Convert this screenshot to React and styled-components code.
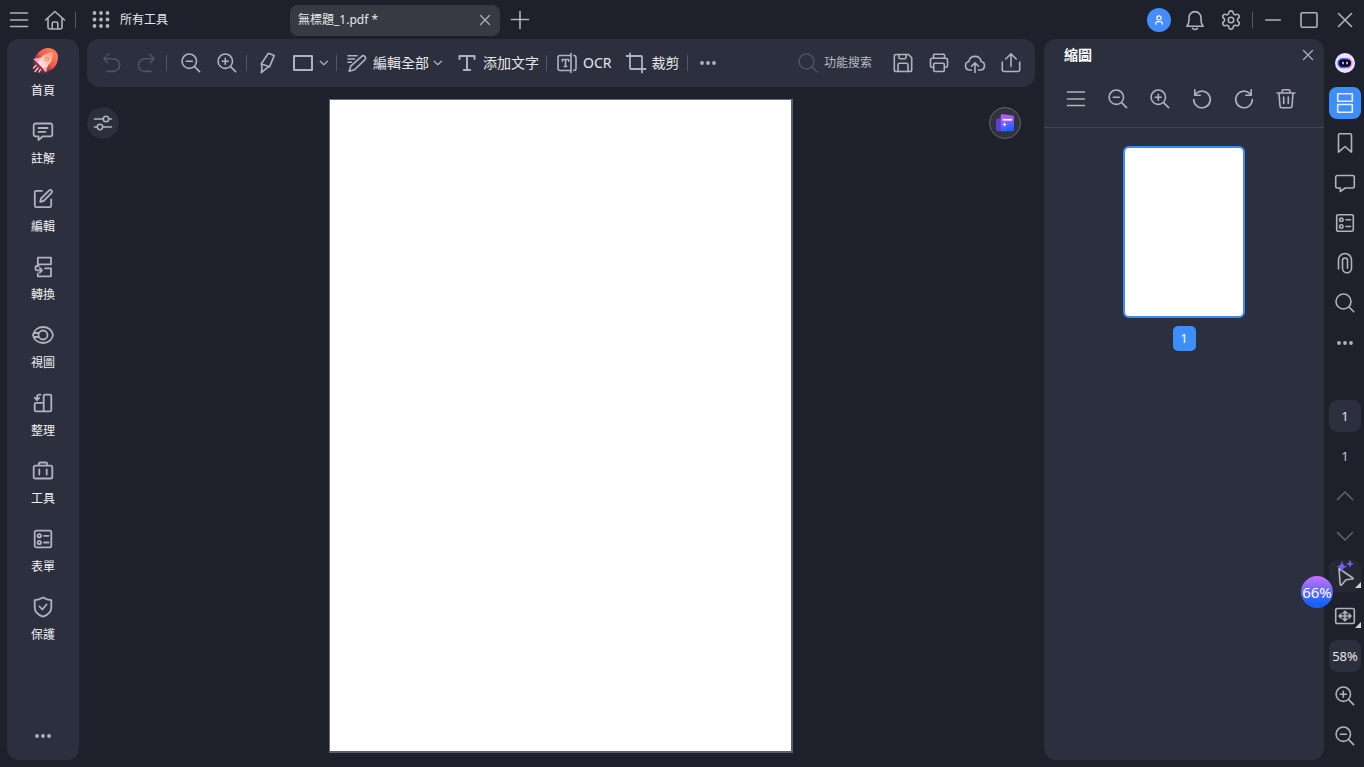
import React, { useState } from 'react';
import styled, { createGlobalStyle } from 'styled-components'
import { Settings } from 'lucide-react'

const GlobalStyle = createGlobalStyle`
    * {
        box-sizing: border-box;
    }

    body {
        margin: 0;
        background: #1e202b;
        color: #e6e7eb;
        font-family: "Noto Sans", "Noto Sans CJK TC", sans-serif;
        font-size: 12px;
        line-height: 16px;
    }

    button, input {
        font: inherit;
        color: inherit;
        background: none;
        border: 0;
        margin: 0;
        padding: 0;
        outline: none;
    }

    button {
        cursor: pointer;
    }
`

const Window = styled.div`
    display: flex;
    flex-direction: column;
    min-height: 100vh;
`

const TitleBar = styled.header`
    display: flex;
    align-items: center;
    height: 39px;
    padding: 1px 7px 0;
`

const TitleStart = styled.div`
    display: flex;
    align-items: center;
    flex: 0 0 283px;
`

const TitleEnd = styled.div`
    display: flex;
    align-items: center;
    gap: 12px;
    margin-left: auto;
`

const Cluster = styled.div`
    display: flex;
    align-items: center;
    gap: ${props => props.$gap ?? 12}px;
`

const Divider = styled.span`
    width: 1px;
    height: 16px;
    margin: 0 ${props => props.$after ?? 8}px 0 ${props => props.$before ?? 7}px;
    background: #555863;
`

const Svg = styled.svg`
    display: block;
    flex: none;
    width: 24px;
    height: 24px;
    overflow: visible;
    fill: none;
    stroke: currentColor;
    stroke-width: ${props => props.$weight || 1.6};
    stroke-linecap: round;
    stroke-linejoin: round;
`

const IconButton = styled.button`
    display: flex;
    align-items: center;
    justify-content: center;
    width: 24px;
    height: 24px;
    color: ${props => props.$dim ? '#4f525f' : '#b0b3be'};
`

const TextButton = styled.button`
    display: flex;
    align-items: center;
    gap: ${props => props.$gap ?? 4}px;
    font-size: ${props => props.$small ? 12 : 14}px;
    line-height: 24px;
    white-space: nowrap;
    color: #e6e7eb;

    svg {
        color: #b0b3be;
    }
`

const Avatar = styled.button`
    display: flex;
    align-items: center;
    justify-content: center;
    width: 24px;
    height: 24px;
    border-radius: 50%;
    background: #458cff;
    color: white;
`

const Tab = styled.div`
    display: flex;
    align-items: center;
    justify-content: space-between;
    width: 210px;
    height: 31px;
    margin-right: 8px;
    padding: 0 3px 0 8px;
    border-radius: 8px;
    background: #383a43;
`

const Body = styled.div`
    display: flex;
    flex: 1;
    padding: 0 3px 7px 7px;
`

const SideNav = styled.nav`
    display: flex;
    flex-direction: column;
    align-items: center;
    gap: 20px;
    flex: 0 0 72px;
    margin-right: 8px;
    padding: 12px 0;
    border-radius: 12px;
    background: #2c2f3d;

    > :last-child {
        margin-top: auto;
    }
`

const NavItem = styled.button`
    display: flex;
    flex-direction: column;
    align-items: center;
    gap: 8px;
    width: 56px;
    line-height: 16px;
    color: #f1f1f4;

    svg {
        color: #b0b3be;
    }
`

const Center = styled.main`
    display: flex;
    flex-direction: column;
    flex: 1;
    min-width: 0;
`

const Toolbar = styled.div`
    display: flex;
    align-items: center;
    height: 48px;
    padding: 0 12px;
    border-radius: 12px;
    background: #2c2f3d;
`

const Search = styled.label`
    display: flex;
    align-items: center;
    gap: 4px;
    margin-left: auto;
    color: #4f525f;

    input {
        width: 55px;
        margin-right: 12px;
        color: #c4c6cd;
    }

    input::placeholder {
        color: #b9bbc3;
        opacity: 1;
    }
`

const Canvas = styled.section`
    display: grid;
    grid-template-columns: 1fr auto 1fr;
    align-items: start;
    flex: 1;
`

const Sheet = styled.div`
    width: 464px;
    aspect-ratio: 464 / 654;
    margin: 12px 0 7px;
    border: 1px solid #6a6c80;
    border-right: 2px solid #5a5c74;
    border-bottom: 2px solid #5a5c74;
    background: white;
`

const RoundButton = styled.button`
    display: flex;
    align-items: center;
    justify-content: center;
    width: 32px;
    height: 32px;
    margin: 20px 14px 0 0;
    justify-self: ${props => props.$end ? 'end' : 'start'};
    border-radius: 50%;
    border: 1px solid ${props => props.$end ? '#62646d' : '#2c2f3d'};
    background: ${props => props.$end ? '#30323c' : '#2c2f3d'};
    color: #b0b3be;
`

const Panel = styled.aside`
    flex: 0 0 280px;
    margin: 0 5px 0 9px;
    border-radius: 12px;
    background: #2c2f3d;
`

const PanelHeader = styled.div`
    display: flex;
    align-items: center;
    justify-content: space-between;
    height: 32px;
    padding: 0 4px 0 20px;
`

const PanelTitle = styled.h2`
    margin: 0;
    font-size: 14px;
    font-weight: 700;
    line-height: 24px;
    color: white;
`

const PanelTools = styled.div`
    display: flex;
    align-items: center;
    gap: 18px;
    height: 57px;
    padding: 0 20px;
    border-bottom: 1px solid #404351;
`

const Thumbnail = styled.button`
    display: flex;
    flex-direction: column;
    align-items: center;
    gap: 8px;
    margin: 18px auto 0;
`

const ThumbSheet = styled.span`
    width: 122px;
    height: 172px;
    border: 2px solid #398cf5;
    border-radius: 6px;
    background: white;
`

const PageBadge = styled.span`
    width: 23px;
    border-radius: 5px;
    background: #3c8ffa;
    color: white;
    font-size: 13px;
    line-height: 25px;
`

const Rail = styled.aside`
    display: flex;
    flex-direction: column;
    justify-content: space-between;
    flex: 0 0 32px;
    padding: 8px 0;
`

const RailGroup = styled.div`
    display: flex;
    flex-direction: column;
    gap: 8px;
`

const RailButton = styled.button`
    position: relative;
    display: flex;
    align-items: center;
    justify-content: center;
    width: 32px;
    height: 32px;
    border-radius: 8px;
    font-size: 13px;
    background: ${props => props.$active ? '#3c8ffa' : props.$filled ? '#2c2f3d' : props.$hover ? '#272932' : 'none'};
    color: ${props => props.$active ? '#e3edff' : props.$dim ? '#60636e' : props.$filled ? '#e6e7eb' : '#b0b3be'};
`

const PageField = styled.input`
    width: 32px;
    height: 32px;
    border-radius: 8px;
    background: #2c2f3d;
    font-size: 13px;
    text-align: center;
`

const PageTotal = styled.span`
    width: 32px;
    font-size: 13px;
    line-height: 32px;
    text-align: center;
    color: #c4c6cd;
`

const Corner = styled.span`
    position: absolute;
    right: 0;
    bottom: 4px;
    border-left: 6px solid transparent;
    border-bottom: 6px solid #d0d2d9;
`

const ToolSlot = styled.div`
    position: relative;
`

const Progress = styled.div`
    position: absolute;
    top: 16px;
    left: -28px;
    display: flex;
    align-items: center;
    justify-content: center;
    width: 32px;
    height: 32px;
    border-radius: 50%;
    background: linear-gradient(#c772fb, #1763ff 85%);
    color: white;
    font-size: 15px;
`

const LENS = 'M17.5 10.2a7.2 7.2 0 1 1-14.4 0 7.2 7.2 0 0 1 14.4 0zM15.6 15.6l5 5'

const PATHS = {
    menu: 'M3.5 5h17M3.5 12h17M3.5 18.5h17',
    home: 'M2.5 12 12 3.5l9.5 8.5M5 10.2V19a2 2 0 0 0 2 2h10a2 2 0 0 0 2-2v-8.8M9.2 21v-5.5a1.5 1.5 0 0 1 1.5-1.5h2.6a1.5 1.5 0 0 1 1.5 1.5V21',
    plus: 'M12 3.5v17M3.5 11.500h17',
    bell: 'M3.8 18.2c1.6-1.8 2.2-3.6 2.2-6V9.600a6 6 0 0 1 12 0v2.600c0 2.400.6 4.200 2.200 6zM9.500 20.300a3.200 3.200 0 0 0 5 0',
    minimize: 'M4.700 12h14.600',
    maximize: 'M5.500 4.700h13a1.500 1.500 0 0 1 1.500 1.500v11.600a1.500 1.500 0 0 1-1.500 1.500h-13a1.500 1.500 0 0 1-1.500-1.500V6.200a1.500 1.500 0 0 1 1.500-1.500z',
    close: 'm5.500 5.500 13 13M18.500 5.500l-13 13',
    closeSmall: 'm7.500 7.500 9 9M16.500 7.500l-9 9',
    user: 'M12 7.800a2.100 2.100 0 1 1 0 4.200 2.100 2.100 0 0 1 0-4.200zM8.700 16.200v-.5c0-1.200.9-2 2-2h2.600c1.100 0 2 .8 2 2v.5',
    undo: 'M9.600 3 4.800 7.800l3.800 3.900M5 7.800h9.400a6.300 6.300 0 0 1 0 12.600H8',
    redo: 'm14.400 3 4.800 4.800-3.800 3.900M19 7.800H9.600a6.300 6.300 0 0 0 0 12.600H16',
    zoomOut: LENS + 'M7.300 10.200h6',
    zoomIn: LENS + 'M7.300 10.200h6M10.300 7.200v6',
    search: 'M18 10.500a7.500 7.500 0 1 1-15 0 7.500 7.500 0 0 1 15 0zM16 16l4.800 4.800',
    highlighter: 'm13.400 2.300 5.900 2.100-4.600 11-3 1.700-5.400 4.600.7-4.500-.7-4.500zM6.400 12.900l8.300 2.900',
    rect: 'M3 5h18v14H3z',
    editAll: 'M16.500 5.600a2.300 2.300 0 0 1 3.500 3L9.500 18.800l-5.300 1.500 1.500-5.100zM3 4.800h9M3 8h6.500M3 11.200h3.500',
    text: 'M4.500 8V5h15v3M12 5v14M8.800 19h6.400',
    ocr: 'M16 4.500H5a2 2 0 0 0-2 2v11a2 2 0 0 0 2 2h11M18.800 4.500a2.200 2.200 0 0 1 2.200 2.200v10.600a2.200 2.200 0 0 1-2.200 2.200M16 2.500v19M7.300 10.200V8.500h6.400v1.700M10.500 8.500v7M9.300 15.500h2.400',
    crop: 'M6 2.500V17a1 1 0 0 0 1 1h14.500M2.500 5H17a1 1 0 0 1 1 1v15.500',
    save: 'M4.700 3.500h12.800l3.200 3.200v12a1.800 1.800 0 0 1-1.800 1.800H5.100a1.800 1.800 0 0 1-1.800-1.800V4.900a1.400 1.400 0 0 1 1.400-1.400zM8 3.800v2.700a1.300 1.300 0 0 0 1.300 1.300h4.400A1.300 1.300 0 0 0 15 6.500V3.800M7 20.300v-6.500a1.500 1.500 0 0 1 1.500-1.500h7a1.500 1.500 0 0 1 1.500 1.500v6.500',
    print: 'M6.500 7V4a.7.7 0 0 1 .7-.7h9.600a.7.7 0 0 1 .7.700v3M6.500 16.300H5a1.500 1.500 0 0 1-1.500-1.500V9A1.800 1.800 0 0 1 5.300 7.200h13.400A1.800 1.800 0 0 1 20.500 9v5.800a1.500 1.500 0 0 1-1.500 1.500h-1.500M8 12.300h8a1.300 1.300 0 0 1 1.300 1.300v5.600a1.300 1.300 0 0 1-1.300 1.300H8a1.300 1.300 0 0 1-1.300-1.300v-5.600A1.300 1.300 0 0 1 8 12.300z',
    cloud: 'M8.500 19H6.700a4.300 4.300 0 0 1-.8-8.500 6.200 6.200 0 0 1 12.200 0 4.300 4.300 0 0 1-.8 8.500h-1.800M12 21.500V12.300M8.500 15.300l3.500-3.500 3.500 3.500',
    share: 'M3.300 11v7.500a2 2 0 0 0 2 2h13.400a2 2 0 0 0 2-2V11M12 15.500V3M6.800 8 12 2.800 17.200 8',
    note: 'M4.500 4.500h15a1.800 1.800 0 0 1 1.800 1.800v9.200a1.800 1.800 0 0 1-1.800 1.800h-7.700L7.500 21v-3.700h-3a1.800 1.800 0 0 1-1.800-1.800V6.300a1.800 1.800 0 0 1 1.800-1.800zM7.500 9h9M7.500 12.800h7',
    edit: 'M11 3.800H5.300a1.500 1.500 0 0 0-1.500 1.500v13.400a1.500 1.500 0 0 0 1.500 1.500h13.400a1.500 1.500 0 0 0 1.500-1.500V12.500M18.200 3.400a1.700 1.700 0 0 1 2.400 2.400l-8 8.200-3.400.8.800-3.300z',
    convert: 'M6.800 2.700H20v6.600H6.800zM14 13.300h6v8H6.800v-2.800M7.500 11H6a1.500 1.500 0 0 0-1.500 1.500v1.300a1.500 1.500 0 0 0 1.500 1.500h5M8.800 13l2.300 2.300-2.300 2.300',
    view: 'M2 12c1-5 5.300-8 10.200-8 5 0 9.200 3.400 9.800 8-.6 4.600-4.800 8-9.800 8C7.300 20 3 17 2 12zM16.500 12a4.500 4.500 0 1 1-9 0 4.500 4.500 0 0 1 9 0zM3 10h5M3 14h5',
    organize: 'M14 3.700h5a1.300 1.300 0 0 1 1.300 1.300v14a1.300 1.300 0 0 1-1.300 1.300h-5a1.300 1.300 0 0 1-1.300-1.300V5A1.300 1.300 0 0 1 14 3.700zM12.500 11.800H5a1.300 1.300 0 0 0-1.300 1.300V19A1.300 1.300 0 0 0 5 20.300h9M9.500 3.700H8.200A2.200 2.200 0 0 0 6 5.900v3M3.800 6.800 6 9l2.200-2.200',
    toolbox: 'M4.300 6.700h15.400a1.600 1.600 0 0 1 1.600 1.600v9.600a1.600 1.600 0 0 1-1.600 1.600H4.300a1.600 1.600 0 0 1-1.600-1.600V8.300a1.600 1.600 0 0 1 1.600-1.600zM7.800 6.500V5a1.500 1.500 0 0 1 1.500-1.500h5.400A1.500 1.500 0 0 1 16.200 5v1.500M8.300 10.500v5M15.700 10.500v5',
    form: 'M5.300 3.700h13.400a1.600 1.600 0 0 1 1.600 1.600v13.400a1.600 1.600 0 0 1-1.600 1.600H5.300a1.600 1.600 0 0 1-1.600-1.600V5.300a1.600 1.600 0 0 1 1.600-1.600zM10 8.800a1.700 1.700 0 1 1-3.400 0 1.700 1.700 0 0 1 3.400 0zM10 15.500a1.700 1.700 0 1 1-3.400 0 1.700 1.700 0 0 1 3.400 0zM13 8.800h4.500M13 15.500h4.500',
    shield: 'M12 2.500c2.600 1.500 5.300 2.400 8.300 2.700v7c0 4.300-3.200 7.700-8.300 9.400-5.100-1.700-8.300-5.100-8.300-9.400v-7C6.700 4.900 9.400 4 12 2.500zM8.500 11.500l2.800 3 4.200-5',
    rotateLeft: 'M3.700 12.500A8.300 8.300 0 1 0 6.200 6.500L4.500 8M4.800 2.800v5.400h5.400',
    rotateRight: 'M20.300 12.500a8.300 8.300 0 1 1-2.500-6L19.500 8M19.200 2.800v5.400h-5.400',
    trash: 'M3 6h18M8 6V4.300a1.500 1.500 0 0 1 1.500-1.500h5A1.500 1.500 0 0 1 16 4.300V6M5 6l1 13.200a1.800 1.800 0 0 0 1.800 1.600h8.400a1.800 1.800 0 0 0 1.800-1.600L19 6M9.700 10v6.500M14.300 10v6.500',
    pages: 'M4.700 2.800h14.600v7.500H4.700zM4.700 13.500h14.600v7.700H4.700z',
    bookmark: 'M6.800 2.800h10.400a1.300 1.300 0 0 1 1.300 1.300v17L12 15.500l-6.500 5.600v-17a1.300 1.300 0 0 1 1.300-1.300z',
    bubble: 'M4.300 4.500h15.400a1.600 1.600 0 0 1 1.600 1.600v9.300a1.600 1.600 0 0 1-1.600 1.600h-7.500L7.300 20.500V17h-3a1.600 1.600 0 0 1-1.600-1.600V6.100a1.600 1.600 0 0 1 1.600-1.600z',
    clip: 'M5.500 18V9a6.500 6.500 0 0 1 13 0v8.200a4.500 4.500 0 0 1-9 0V9.500a2.500 2.500 0 0 1 5 0v7.800',
    up: 'm4.500 15.500 7.500-7.500 7.500 7.500',
    down: 'm4.500 8.500 7.500 7.500 7.500-7.500',
    fit: 'M4.200 4.500h15.600a1.500 1.500 0 0 1 1.500 1.500v12a1.500 1.500 0 0 1-1.500 1.500H4.200A1.500 1.500 0 0 1 2.700 18V6a1.500 1.500 0 0 1 1.500-1.500zM12 8v8M6.500 12h11M10 9.200l2-2 2 2M10 14.800l2 2 2-2M8 10l-2 2 2 2M16 10l2 2-2 2',
    sliders: 'M3.500 8H12M18 8h2.500M17.700 8a2.700 2.700 0 1 1-5.400 0 2.700 2.700 0 0 1 5.400 0zM3.500 16H6M12 16h8.500M11.700 16a2.700 2.700 0 1 1-5.400 0 2.700 2.700 0 0 1 5.400 0z'
}

const Icon = ({ name, weight }) => (
    <Svg viewBox="0 0 24 24" $weight={weight} aria-hidden="true">
        <path d={PATHS[name]} />
    </Svg>
)

const Dots = () => (
    <Svg viewBox="0 0 24 24" aria-hidden="true">
        {[6, 12, 18].map(x => <circle key={x} cx={x} cy="12" r="1.9" fill="currentColor" stroke="none" />)}
    </Svg>
)

const AppsIcon = () => (
    <Svg viewBox="0 0 24 24" aria-hidden="true">
        {[5, 11.5, 18].map(y => [5.5, 12, 18.5].map(x => (
            <circle key={x + '-' + y} cx={x} cy={y} r="1.9" fill="currentColor" stroke="none" />
        )))}
    </Svg>
)

const Caret = styled(Svg)`
    width: 10px;
    height: 10px;
    stroke-width: 1.2;
`

const CaretIcon = () => (
    <Caret viewBox="0 0 10 10" aria-hidden="true">
        <path d="m1.2 3.200 3.600 3.500 3.600-3.500" />
    </Caret>
)

const RocketIcon = () => (
    <Svg viewBox="0 0 24 24" aria-hidden="true">
        <defs>
            <linearGradient id="orb" x1="1" y1="0" x2="0" y2="1">
                <stop offset="0.2" stopColor="#ff7a58" />
                <stop offset="0.5" stopColor="#f4574c" />
                <stop offset="0.85" stopColor="#c93448" stopOpacity="0" />
            </linearGradient>
            <linearGradient id="hull" x1="1" y1="0" x2="0" y2="1">
                <stop offset="0.1" stopColor="#ffa585" />
                <stop offset="0.45" stopColor="#ffc9c4" />
                <stop offset="0.8" stopColor="#ffffff" />
            </linearGradient>
            <filter id="glow" x="-50%" y="-50%" width="200%" height="200%">
                <feGaussianBlur stdDeviation="2" />
            </filter>
        </defs>
        <g stroke="none">
            <ellipse cx="11" cy="13" rx="8" ry="8" fill="#c9354a" opacity="0.6" filter="url(#glow)" />
            <path d="M17-3c6 0 10 4 10 9 0 9-7 15-14 15C7 21 3 17 3 12 3 4 10-3 17-3z" fill="url(#orb)" />
            <path d="M22 1.500c-5-.2-9 1.500-12 5L2.500 8l4.300 4L12 17.500l2.800 4 2-7c3.700-3 5.200-7 5.200-13z" fill="url(#hull)" />
            <path d="M2.500 8l7-1-3 4.500zM14.800 21.500l1.700-6.500-4 2.500z" fill="#ff9fb6" />
            <circle cx="16" cy="8" r="2.200" fill="#f58a5e" />
            <circle cx="16" cy="8" r="1" fill="#ffd9a0" />
        </g>
        <path d="M5 14.500 2.500 17M7 17 4 20.500M9.500 18.500 8 21" stroke="#ffc9c4" strokeWidth="1.400" />
    </Svg>
)

const CardsIcon = () => (
    <Svg viewBox="0 0 24 24" aria-hidden="true">
        <defs>
            <linearGradient id="card" x1="0.3" y1="0" x2="0.6" y2="1">
                <stop offset="0" stopColor="#c25af2" />
                <stop offset="0.5" stopColor="#7a5cff" />
                <stop offset="1" stopColor="#0d66ff" />
            </linearGradient>
        </defs>
        <g stroke="none">
            <path d="M4.500 7.500h8v12.700h-8A1.500 1.500 0 0 1 3 18.700V9a1.500 1.500 0 0 1 1.500-1.500z" fill="#5a3fd0" />
            <path d="M10 3.300 19.800 4.600A1.500 1.500 0 0 1 21 6v12.700a1.500 1.500 0 0 1-1.500 1.500H9.200A1.500 1.500 0 0 1 7.700 18.700V5A1.700 1.700 0 0 1 10 3.300z" fill="url(#card)" />
            <path d="M10 8h9v1.400h-9zM11.500 11.700l.6 1.200 1.200.6-1.200.6-.6 1.200-.6-1.200-1.200-.6 1.200-.6z" fill="#fff" stroke="#fff" strokeWidth="0.300" />
        </g>
    </Svg>
)

const RobotIcon = () => (
    <Svg viewBox="0 0 24 24" aria-hidden="true">
        <defs>
            <linearGradient id="visor">
                <stop offset="0" stopColor="#2a63ff" />
                <stop offset="0.5" stopColor="#7a4dff" />
                <stop offset="1" stopColor="#e58cf8" />
            </linearGradient>
        </defs>
        <circle cx="12" cy="12" r="10" fill="#e9e2fb" stroke="none" />
        <rect x="5.200" y="7.700" width="13.600" height="8.800" rx="4.400" fill="#08060f" stroke="url(#visor)" strokeWidth="1.600" />
        <path d="M10 11.200v1.600M14 11.200v1.600" stroke="#fff" strokeWidth="1.400" />
    </Svg>
)

const CursorIcon = () => (
    <Svg viewBox="0 0 24 24" aria-hidden="true">
        <defs>
            <linearGradient id="spark" x1="0.2" y1="0" x2="0.8" y2="1">
                <stop offset="0" stopColor="#a85cff" />
                <stop offset="1" stopColor="#2f66ff" />
            </linearGradient>
        </defs>
        <path d="M6 4.500 19.800 14c.5.400.3 1-.3 1l-6.500.7-4.500 5.200c-.5.500-1.200.3-1.300-.4z" />
        <g fill="url(#spark)" stroke="none">
            <path d="M9-2c.7 3 1.700 4 4.700 4.700C10.700 3.400 9.700 4.400 9 7.400c-.7-3-1.700-4-4.700-4.700C7.300 2 8.300 1 9-2z" stroke="url(#spark)" strokeWidth="0.500" />
            <path d="M17-3.200c.5 2 1.200 2.700 3.200 3.200-2 .5-2.700 1.200-3.200 3.200-.5-2-1.200-2.700-3.200-3.200 2-.5 2.700-1.200 3.200-3.200z" stroke="url(#spark)" strokeWidth="0.500" />
        </g>
    </Svg>
)

const NAV = [
    { icon: 'note', label: '註解' },
    { icon: 'edit', label: '編輯' },
    { icon: 'convert', label: '轉換' },
    { icon: 'view', label: '視圖' },
    { icon: 'organize', label: '整理' },
    { icon: 'toolbox', label: '工具' },
    { icon: 'form', label: '表單' },
    { icon: 'shield', label: '保護' }
]

const PANEL_TOOLS = [
    { icon: 'menu', label: '選單' },
    { icon: 'zoomOut', label: '縮小' },
    { icon: 'zoomIn', label: '放大' },
    { icon: 'rotateLeft', label: '向左旋轉' },
    { icon: 'rotateRight', label: '向右旋轉' },
    { icon: 'trash', label: '刪除' }
]

const RAIL_TABS = [
    { icon: 'pages', label: '縮圖' },
    { icon: 'bookmark', label: '書籤' },
    { icon: 'bubble', label: '註解' },
    { icon: 'form', label: '表單' },
    { icon: 'clip', label: '附件' },
    { icon: 'search', label: '搜索' }
]

const TopBar = () => (
    <TitleBar>
        <TitleStart>
            <Cluster>
                <IconButton aria-label="選單"><Icon name="menu" /></IconButton>
                <IconButton aria-label="主頁"><Icon name="home" /></IconButton>
            </Cluster>
            <Divider $before={8} $after={13} />
            <TextButton $small $gap={7}><AppsIcon />所有工具</TextButton>
        </TitleStart>
        <Tab>
            <span>無標題_1.pdf *</span>
            <IconButton aria-label="關閉分頁"><Icon name="closeSmall" weight={1.2} /></IconButton>
        </Tab>
        <IconButton aria-label="新增分頁"><Icon name="plus" /></IconButton>
        <TitleEnd>
            <Avatar aria-label="帳戶"><Icon name="user" weight={1.2} /></Avatar>
            <IconButton aria-label="通知"><Icon name="bell" /></IconButton>
            <Cluster $gap={8}>
                <IconButton aria-label="設定"><Settings size={22} strokeWidth={1.7} /></IconButton>
                <Divider $before={1} $after={0} />
                <IconButton aria-label="最小化"><Icon name="minimize" /></IconButton>
            </Cluster>
            <IconButton aria-label="最大化"><Icon name="maximize" /></IconButton>
            <IconButton aria-label="關閉"><Icon name="close" /></IconButton>
        </TitleEnd>
    </TitleBar>
)

const MainToolbar = () => (
    <Toolbar>
        <Cluster>
            <IconButton $dim aria-label="復原"><Icon name="undo" /></IconButton>
            <IconButton $dim aria-label="重做"><Icon name="redo" /></IconButton>
        </Cluster>
        <Divider $after={12} />
        <Cluster>
            <IconButton aria-label="縮小"><Icon name="zoomOut" /></IconButton>
            <IconButton aria-label="放大"><Icon name="zoomIn" /></IconButton>
        </Cluster>
        <Divider />
        <Cluster>
            <IconButton aria-label="螢光筆"><Icon name="highlighter" /></IconButton>
            <TextButton aria-label="矩形"><Icon name="rect" weight={2} /><CaretIcon /></TextButton>
        </Cluster>
        <Divider />
        <Cluster>
            <TextButton><Icon name="editAll" />編輯全部<CaretIcon /></TextButton>
            <TextButton><Icon name="text" weight={2} />添加文字</TextButton>
        </Cluster>
        <Divider />
        <Cluster>
            <TextButton><Icon name="ocr" />OCR</TextButton>
            <TextButton><Icon name="crop" weight={1.8} />裁剪</TextButton>
        </Cluster>
        <Divider />
        <IconButton aria-label="更多"><Dots /></IconButton>
        <Search>
            <Icon name="search" />
            <input type="text" aria-label="功能搜索" placeholder="功能搜索" />
        </Search>
        <Cluster>
            <IconButton aria-label="儲存"><Icon name="save" /></IconButton>
            <IconButton aria-label="列印"><Icon name="print" /></IconButton>
            <IconButton aria-label="上傳"><Icon name="cloud" /></IconButton>
            <IconButton aria-label="分享"><Icon name="share" /></IconButton>
        </Cluster>
    </Toolbar>
)

const App = () => {
    const [railTab, setRailTab] = useState('pages')
    const [page, setPage] = useState('1')

    return (
        <Window>
            <GlobalStyle />
            <TopBar />
            <Body>
                <SideNav>
                    <NavItem><RocketIcon />首頁</NavItem>
                    {NAV.map(item => (
                        <NavItem key={item.icon}><Icon name={item.icon} weight={1.8} />{item.label}</NavItem>
                    ))}
                    <IconButton aria-label="更多"><Dots /></IconButton>
                </SideNav>
                <Center>
                    <MainToolbar />
                    <Canvas>
                        <RoundButton aria-label="調整"><Icon name="sliders" /></RoundButton>
                        <Sheet />
                        <RoundButton $end aria-label="AI 助手"><CardsIcon /></RoundButton>
                    </Canvas>
                </Center>
                <Panel>
                    <PanelHeader>
                        <PanelTitle>縮圖</PanelTitle>
                        <IconButton aria-label="關閉面板"><Icon name="closeSmall" weight={1.2} /></IconButton>
                    </PanelHeader>
                    <PanelTools>
                        {PANEL_TOOLS.map(tool => (
                            <IconButton key={tool.icon} aria-label={tool.label}><Icon name={tool.icon} /></IconButton>
                        ))}
                    </PanelTools>
                    <Thumbnail>
                        <ThumbSheet />
                        <PageBadge>1</PageBadge>
                    </Thumbnail>
                </Panel>
                <Rail>
                    <RailGroup>
                        <RailButton aria-label="AI"><RobotIcon /></RailButton>
                        {RAIL_TABS.map(tab => (
                            <RailButton
                                key={tab.icon}
                                aria-label={tab.label}
                                $active={railTab === tab.icon}
                                onClick={() => setRailTab(tab.icon)}
                            >
                                <Icon name={tab.icon} />
                            </RailButton>
                        ))}
                        <RailButton aria-label="更多"><Dots /></RailButton>
                    </RailGroup>
                    <RailGroup>
                        <PageField aria-label="頁碼" value={page} onChange={(e) => setPage(e.target.value)} />
                        <PageTotal>1</PageTotal>
                        <RailButton $dim aria-label="上一頁"><Icon name="up" /></RailButton>
                        <RailButton $dim aria-label="下一頁"><Icon name="down" /></RailButton>
                        <ToolSlot>
                            <RailButton $hover aria-label="選取"><CursorIcon /><Corner /></RailButton>
                            <Progress>66%</Progress>
                        </ToolSlot>
                        <RailButton aria-label="符合頁面"><Icon name="fit" /><Corner /></RailButton>
                        <RailButton $filled>58%</RailButton>
                        <RailButton aria-label="放大"><Icon name="zoomIn" /></RailButton>
                        <RailButton aria-label="縮小"><Icon name="zoomOut" /></RailButton>
                    </RailGroup>
                </Rail>
            </Body>
        </Window>
    )
}

export default App
